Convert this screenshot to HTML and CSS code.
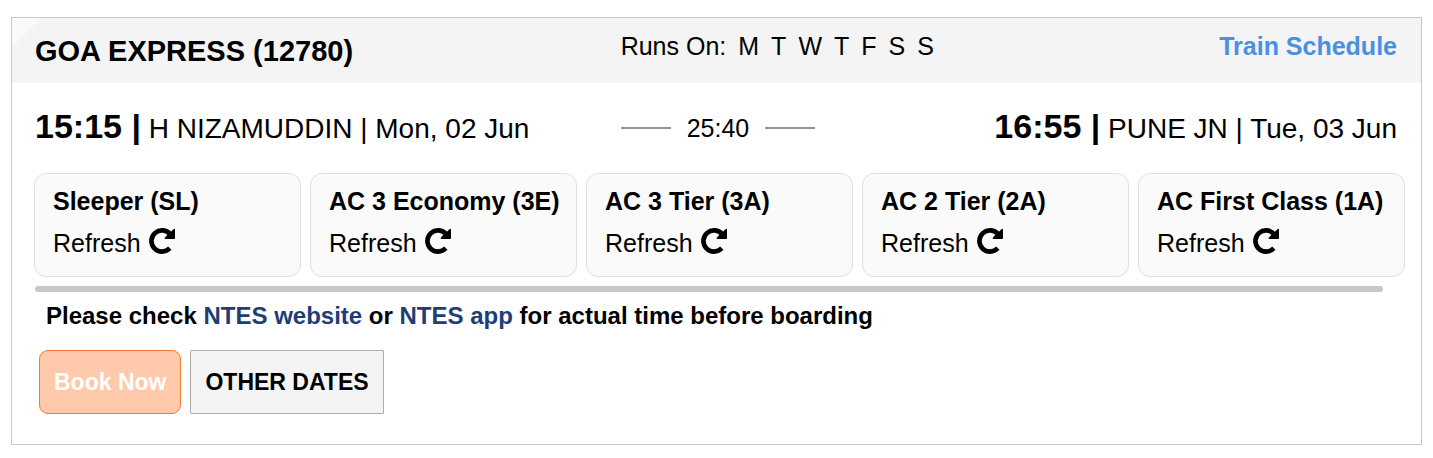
FILE: index.html
```
<!DOCTYPE html>
<html lang="en">
<head>
    <meta charset="UTF-8">
    <meta name="viewport" content="width=device-width, initial-scale=1.0">
    <title>Train Search</title>
    <link rel="stylesheet" href="styles.css">
</head>
<body>
    <svg class="sprite" aria-hidden="true">
        <symbol id="icon-refresh" viewBox="0 0 26 26">
            <path d="M20.8 20.2A10.6 10.6 0 1 1 21.4 6.5" fill="none" stroke="currentColor" stroke-width="4.7"/>
            <path d="M26 1.4V10.2Q26 11 25.2 11H16.6Q15.2 11 15.8 9.8L18 7.2L22.4 3.2L24.4 1.2Q26 0 26 1.4Z" fill="currentColor"/>
        </symbol>
    </svg>

    <div class="train">
        <div class="train-header">
            <h1 class="train-name">GOA EXPRESS (12780)</h1>
            <div class="runs-on">
                <span>Runs On:</span>
                <span>M</span>
                <span>T</span>
                <span>W</span>
                <span>T</span>
                <span>F</span>
                <span>S</span>
                <span>S</span>
            </div>
            <a class="schedule" href="#">Train Schedule</a>
        </div>

        <div class="journey">
            <div><span class="time">15:15 |</span> H NIZAMUDDIN | Mon, 02 Jun</div>
            <div class="duration">25:40</div>
            <div><span class="time">16:55 |</span> PUNE JN | Tue, 03 Jun</div>
        </div>

        <div class="classes">
            <div class="class-card">
                <strong>Sleeper (SL)</strong>
                <button type="button" class="refresh">Refresh <svg class="icon"><use href="#icon-refresh"/></svg></button>
            </div>
            <div class="class-card">
                <strong>AC 3 Economy (3E)</strong>
                <button type="button" class="refresh">Refresh <svg class="icon"><use href="#icon-refresh"/></svg></button>
            </div>
            <div class="class-card">
                <strong>AC 3 Tier (3A)</strong>
                <button type="button" class="refresh">Refresh <svg class="icon"><use href="#icon-refresh"/></svg></button>
            </div>
            <div class="class-card">
                <strong>AC 2 Tier (2A)</strong>
                <button type="button" class="refresh">Refresh <svg class="icon"><use href="#icon-refresh"/></svg></button>
            </div>
            <div class="class-card">
                <strong>AC First Class (1A)</strong>
                <button type="button" class="refresh">Refresh <svg class="icon"><use href="#icon-refresh"/></svg></button>
            </div>
        </div>
        <div class="scroll-track"></div>

        <p class="note">Please check <a href="#">NTES website</a> or <a href="#">NTES app</a> for actual time before boarding</p>

        <div class="actions">
            <button type="button" class="btn btn-book">Book Now</button>
            <button type="button" class="btn btn-dates">OTHER DATES</button>
        </div>
    </div>
</body>
</html>
```
FILE: styles.css
```
* {
    box-sizing: border-box;
}

body {
    margin: 0;
    font-family: "Liberation Sans", Arial, sans-serif;
    font-size: 25px;
    line-height: 28px;
    color: #000;
    background-color: #fff;
}

a {
    text-decoration: none;
}

button {
    font-family: inherit;
    color: inherit;
    cursor: pointer;
}

.sprite {
    display: none;
}

.train {
    margin: 17px 11px 13px;
    padding-bottom: 30px;
    border: 1px solid #c8c8c8;
}

.train-header,
.journey {
    display: grid;
    grid-template-columns: 43% 1fr auto;
    padding: 0 24px 0 23px;
    white-space: nowrap;
}

.train-header {
    height: 65px;
    padding-top: 14px;
    background: linear-gradient(135deg, #f9f9f9 21px, #f4f4f4 21px);
}

.train-name {
    margin: 0;
    font-size: 29px;
    line-height: 38px;
}

.runs-on {
    display: flex;
    gap: 12px;
}

.schedule {
    font-weight: bold;
    color: #4a90e2;
}

.journey {
    align-items: center;
    padding-top: 23px;
    font-size: 28px;
    line-height: 40px;
}

.time {
    font-size: 34px;
    font-weight: bold;
}

.duration {
    display: flex;
    align-items: center;
    gap: 16px;
    font-size: 25px;
}

.duration::before,
.duration::after {
    content: "";
    width: 50px;
    height: 2px;
    background-color: #949494;
}

.classes {
    display: grid;
    grid-template-columns: repeat(5, minmax(0, 1fr));
    gap: 9px;
    padding: 24px 16px 0 22px;
}

.class-card {
    height: 104px;
    padding: 13px 18px;
    border: 1px solid #e0e0e0;
    border-radius: 12px;
    background-color: #fafafa;
    white-space: nowrap;
}

.class-card strong {
    display: block;
}

.refresh {
    display: flex;
    align-items: center;
    gap: 8px;
    margin-top: 13px;
    padding: 0;
    border: none;
    background: none;
    font-size: 25px;
    line-height: 28px;
}

.icon {
    width: 26px;
    height: 26px;
    margin-bottom: 4px;
}

.scroll-track {
    height: 6px;
    margin: 9px 38px 0 23px;
    border-radius: 3px;
    background-color: #c8c8c8;
}

.note {
    margin: 10px 34px 0;
    font-size: 24px;
    font-weight: bold;
}

.note a {
    color: #213d77;
}

.actions {
    display: flex;
    gap: 9px;
    margin: 20px 27px 0;
}

.btn {
    height: 64px;
    padding: 0 14px;
    font-size: 23px;
    font-weight: bold;
}

.btn-book {
    border: 1px solid #fb792b;
    border-radius: 9px;
    background-color: #ffc9ab;
    color: #fff;
}

.btn-dates {
    border: 1px solid #adadad;
    border-radius: 1px;
    background-color: #f4f4f4;
}
```
